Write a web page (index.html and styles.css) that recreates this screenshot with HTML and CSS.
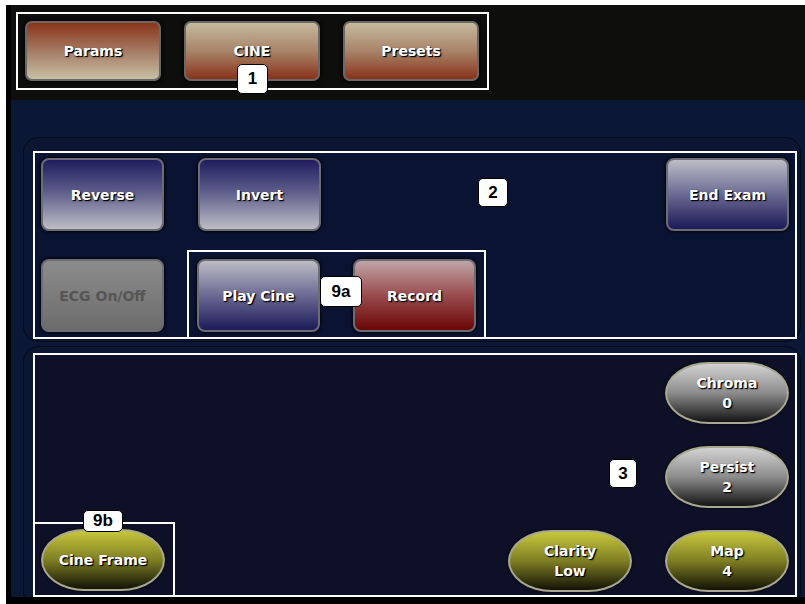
FILE: index.html
```html
<!doctype html>
<html lang="en">
<head>
    <meta charset="utf-8">
    <title>Touch Panel</title>
    <link rel="stylesheet" href="styles.css">
</head>
<body>
    <div class="screen">
        <!-- mode tabs -->
        <div class="topbar">
            <div class="group group-tabs">
                <button class="key tab tab-active">Params</button>
                <button class="key tab">CINE</button>
                <button class="key tab">Presets</button>
                <span class="badge badge-1">1</span>
            </div>
        </div>

        <div class="main">
            <!-- image controls -->
            <section class="panel panel-controls">
                <div class="group group-controls">
                    <div class="row">
                        <button class="key rect navy-up">Reverse</button>
                        <button class="key rect navy-up">Invert</button>
                        <button class="key rect navy-down end">End Exam</button>
                    </div>
                    <div class="row row-cine">
                        <button class="key rect disabled">ECG On/Off</button>
                        <div class="group group-cine">
                            <button class="key rect navy-down">Play Cine</button>
                            <button class="key rect red">Record</button>
                            <span class="badge badge-9a">9a</span>
                        </div>
                    </div>
                    <span class="badge badge-2">2</span>
                </div>
            </section>

            <!-- rotary knobs -->
            <section class="panel panel-knobs">
                <div class="group group-knobs">
                    <button class="key pill gray knob-chroma">Chroma<br>0</button>
                    <button class="key pill gray knob-persist">Persist<br>2</button>
                    <div class="group group-frame">
                        <button class="key pill olive">Cine Frame</button>
                        <span class="badge badge-9b">9b</span>
                    </div>
                    <button class="key pill olive knob-clarity">Clarity<br>Low</button>
                    <button class="key pill olive knob-map">Map<br>4</button>
                    <span class="badge badge-3">3</span>
                </div>
            </section>
        </div>
    </div>
</body>
</html>
```

FILE: styles.css
```css
body {
    margin: 0;
    background-color: #fff;
    font-family: 'DejaVu Sans', 'Liberation Sans', sans-serif;
}

.screen {
    width: 794px;
    height: 592px;
    margin: 5px 0 0 6px;
    padding: 0 0 7px 5px;
    display: flex;
    flex-direction: column;
    background-color: #000;
}

/* outlined groups */
.group {
    position: relative;
    border: 2px solid #fff;
    box-sizing: border-box;
}

.badge {
    position: absolute;
    box-sizing: border-box;
    display: flex;
    align-items: center;
    justify-content: center;
    background-color: #fff;
    border: 1.5px solid #000;
    border-radius: 5px;
    color: #000;
    font-family: 'Liberation Sans', Arial, sans-serif;
    font-weight: bold;
    font-size: 17px;
}

/* keys */
.key {
    margin: 0;
    padding: 0;
    box-sizing: border-box;
    font-family: 'DejaVu Sans', sans-serif;
    font-weight: bold;
    font-size: 14px;
    line-height: 20px;
    color: #fff;
    text-shadow: 1px 1px 0 #000, 1px 1px 2px rgba(0, 0, 0, .8);
    cursor: pointer;
}

.rect {
    width: 123px;
    height: 73px;
    border: 2px solid #6c6c74;
    border-radius: 8px;
    box-shadow: 0 0 3px 1px rgba(0, 0, 0, .8);
}

.navy-up {
    background: linear-gradient(#1f1d5e, #5c5c8a 45%, #bdbdc6);
}

.navy-down {
    background: linear-gradient(#bdbdc6, #6a6a93 50%, #1c1a58);
}

.red {
    background: linear-gradient(#bfa5a7, #9a4b4e 50%, #6a0606);
}

.disabled {
    background: linear-gradient(#8c8c8c, #6c6c6c);
    color: #555;
    text-shadow: none;
}

.pill {
    width: 124px;
    height: 62px;
    border: 2px solid #a8a890;
    border-radius: 44px / 31px;
    box-shadow: 0 0 3px rgba(0, 0, 0, .8);
}

.gray {
    background: linear-gradient(#d2d2d2, #8c8c8c 50%, #141414);
}

.olive {
    background: linear-gradient(#c7c73c, #7e7e24 50%, #121206);
}

/* top bar */
.topbar {
    height: 95px;
    padding: 7px 0 0 5px;
    box-sizing: border-box;
    background-color: #0e0f0d;
}

.group-tabs {
    width: 473px;
    height: 78px;
    padding: 7px;
    display: flex;
    gap: 23px;
}

.tab {
    width: 136px;
    height: 60px;
    border: 2px solid #6b6864;
    border-radius: 7px;
    box-shadow: 0 0 4px 1px rgba(0, 0, 0, .9);
    background: linear-gradient(#c6b99e, #a88468 50%, #88321a);
}

.tab-active {
    background: linear-gradient(#8a3519, #a8826a 55%, #c8bfa4);
}

.badge-1 {
    left: 219px;
    top: 50px;
    width: 31px;
    height: 30px;
}

/* main area */
.main {
    flex: 1;
    overflow: hidden;
    padding: 37px 0 0 12px;
    display: flex;
    flex-direction: column;
    gap: 4px;
    background-color: #0b1835;
}

.panel {
    margin-right: 4px;
    border: 1px solid #040919;
    border-radius: 15px;
    background-color: #0a1632;
    box-sizing: border-box;
    flex-shrink: 0;
}

.panel-controls {
    height: 205px;
    padding: 13px 3px 0 9px;
}

.panel-knobs {
    height: 262px;
    padding: 6px 3px 0 9px;
}

.group-controls {
    height: 188px;
    background-color: #0a1331;
}

.row {
    display: flex;
    padding: 5px 6px 0;
    gap: 34px;
}

.end {
    margin-left: auto;
}

.row-cine {
    padding-top: 19px;
    gap: 23px;
}

.row-cine .disabled {
    margin-top: 9px;
}

.group-cine {
    border-bottom: none;
    padding: 7px 8px 5px;
    display: flex;
    gap: 33px;
}

.badge-2 {
    left: 443px;
    top: 25px;
    width: 30px;
    height: 29px;
}

.badge-9a {
    left: 131px;
    top: 24px;
    width: 42px;
    height: 31px;
}

.group-knobs {
    height: 244px;
    padding: 7px 6px 0 0;
    display: grid;
    grid-template-columns: 140px 1fr 124px 124px;
    grid-template-rows: 62px 62px 1fr;
    column-gap: 33px;
    row-gap: 22px;
    background-color: #0e1027;
}

.knob-chroma {
    grid-column: 4;
    grid-row: 1;
}

.knob-persist {
    grid-column: 4;
    grid-row: 2;
}

.knob-clarity {
    grid-column: 3;
    grid-row: 3;
}

.knob-map {
    grid-column: 4;
    grid-row: 3;
}

.group-frame {
    grid-column: 1;
    grid-row: 3;
    margin-top: -8px;
    border-left: none;
    border-bottom: none;
    padding: 5px 0 0 6px;
}

.badge-9b {
    left: 48px;
    top: -14px;
    width: 40px;
    height: 22px;
}

.badge-3 {
    left: 574px;
    top: 104px;
    width: 28px;
    height: 29px;
}
```
